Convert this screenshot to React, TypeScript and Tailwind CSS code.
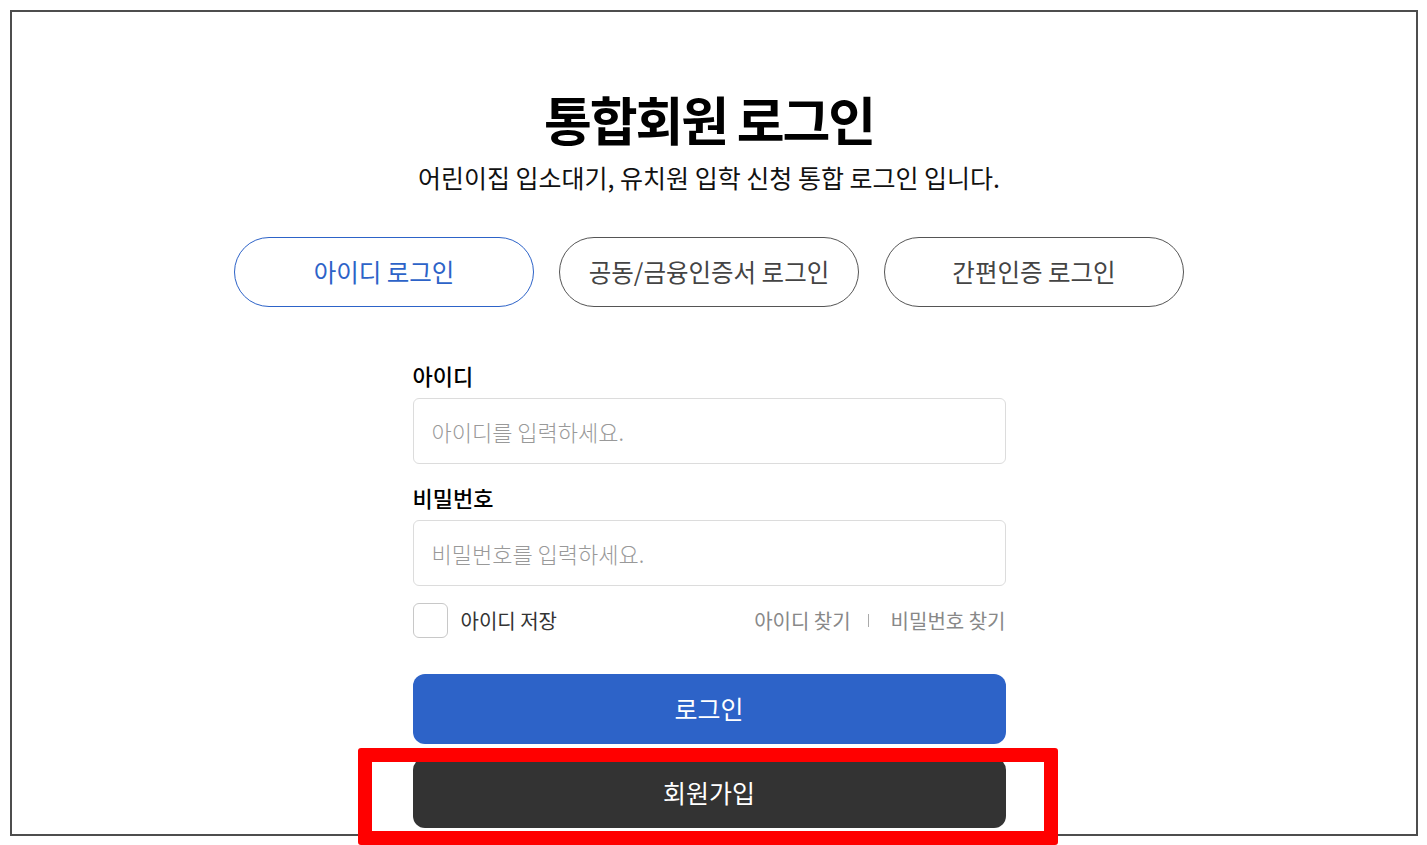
import * as React from "react";

const font = { fontFamily: '"Noto Sans CJK KR", "Noto Sans", sans-serif' };

const tabs = [
  { label: "아이디 로그인", active: true },
  { label: "공동/금융인증서 로그인", active: false },
  { label: "간편인증 로그인", active: false },
];

export default function App() {
  const [saveId, setSaveId] = React.useState(false);

  return (
    <div className="relative w-[1427px] h-[845px] bg-white overflow-hidden" style={font}>
      <div className="absolute left-[10px] top-[10px] w-[1408px] h-[826px] border-2 border-[#4d4d4d]">
        <div className="flex flex-col items-center pt-[75px] pr-[10px]">
          <h1 className="text-[52px] leading-[64px] font-bold text-black tracking-[-0.04em]">통합회원 로그인</h1>
          <p className="mt-[9px] text-[25px] leading-[34px] text-[#111]">
            어린이집 입소대기, 유치원 입학 신청 통합 로그인 입니다.
          </p>

          {/* login type tabs */}
          <div className="mt-[43px] flex gap-[25px]">
            {tabs.map((t) => (
              <button
                key={t.label}
                className={
                  t.active
                    ? "w-[300px] h-[70px] rounded-full border border-[#2d63c8] text-[#2d63c8] text-[24.5px]"
                    : "w-[300px] h-[70px] rounded-full border border-[#555] text-[#444] text-[24.5px]"
                }
              >
                {t.label}
              </button>
            ))}
          </div>

          <form className="mt-[53px] w-[593px] flex flex-col" onSubmit={(e) => e.preventDefault()}>
            <label className="text-[22px] leading-[30px] font-medium text-black">아이디</label>
            <input
              className="mt-[8px] h-[66px] rounded-[6px] border border-[#dcdcdc] px-[18px] text-[22px] font-light text-[#333] placeholder:text-[#999] outline-none"
              placeholder="아이디를 입력하세요."
            />

            <label className="mt-[18px] text-[22px] leading-[30px] font-medium text-black">비밀번호</label>
            <input
              type="password"
              className="mt-[8px] h-[66px] rounded-[6px] border border-[#dcdcdc] px-[18px] text-[22px] font-light text-[#333] placeholder:text-[#999] outline-none"
              placeholder="비밀번호를 입력하세요."
            />

            <div className="mt-[17px] flex items-center justify-between">
              <label className="flex items-center gap-[13px] cursor-pointer">
                <span
                  onClick={() => setSaveId(!saveId)}
                  className="w-[35px] h-[35px] rounded-[6px] border border-[#c8c8c8] bg-white"
                />
                <span className="text-[20px] text-[#333]">아이디 저장</span>
              </label>
              <div className="flex items-center text-[20px] text-[#888]">
                <a>아이디 찾기</a>
                <span className="ml-[17px] mr-[22px] w-px h-[13px] bg-[#aaa]" />
                <a>비밀번호 찾기</a>
              </div>
            </div>

            <button className="mt-[36px] h-[70px] rounded-[12px] bg-[#2d63c8] text-white text-[25px]">로그인</button>
            <button className="mt-[14px] h-[70px] rounded-[12px] bg-[#333333] text-white text-[25px]">회원가입</button>
          </form>
        </div>
      </div>

      {/* highlight annotation */}
      <div className="absolute left-[358px] top-[748px] w-[700px] h-[97px] border-[14px] border-[#ff0000] rounded-[3px] pointer-events-none" />
    </div>
  );
}
